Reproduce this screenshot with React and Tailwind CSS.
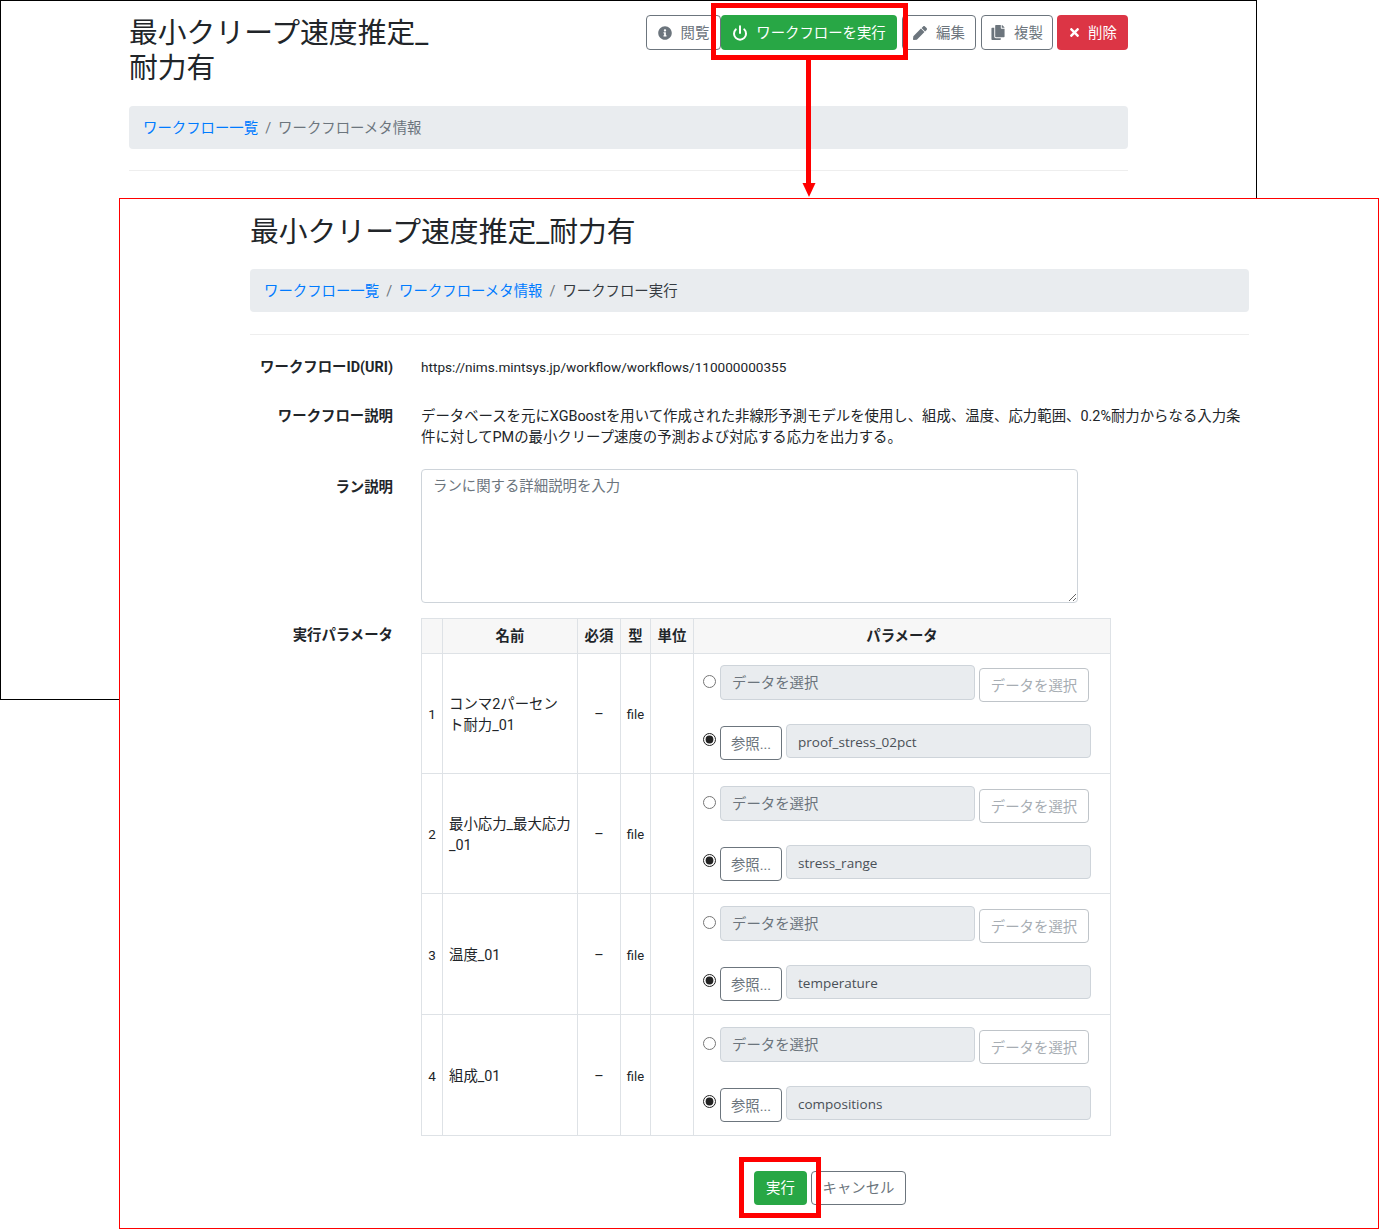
import { FaInfoCircle, FaPen, FaCopy, FaTimes } from 'react-icons/fa';
import { Power } from 'lucide-react';

const params = [
  { no: 1, name: 'コンマ2パーセント耐力_01', file: 'proof_stress_02pct', h: 'h-[120px]', pt: 'pt-[11px]' },
  { no: 2, name: '最小応力_最大応力_01', file: 'stress_range', h: 'h-[120px]', pt: 'pt-[12px]' },
  { no: 3, name: '温度_01', file: 'temperature', h: 'h-[121px]', pt: 'pt-[12px]' },
  { no: 4, name: '組成_01', file: 'compositions', h: 'h-[121px]', pt: 'pt-[12px]' },
];

const outlineBtn = 'h-[35px] flex items-center justify-center gap-[9px] rounded border border-[#6c757d] bg-white text-[#6c757d] text-[14.4px] whitespace-nowrap';

function Breadcrumb({ children }) {
  return (
    <div className="h-[43px] flex items-center gap-[7px] px-[14px] pt-[2px] rounded bg-[#e9ecef] text-[14.4px] text-[#6c757d]">
      {children}
    </div>
  );
}

function ParamRow({ file, pt }) {
  return (
    <div className={`pl-[9px] ${pt}`}>
      <div className="flex items-start gap-[4px] h-[59px]">
        <input type="radio" name={file} className="w-[13px] h-[13px] m-0 mt-[10px] accent-[#222]" />
        <input disabled placeholder="データを選択" className="w-[255px] h-[35px] px-[11px] pt-[2px] rounded border border-[#ced4da] bg-[#e9ecef] text-[14.4px] placeholder:text-[#6c757d]" />
        <button disabled className="w-[110px] h-[34px] mt-[3px] pt-[2px] rounded border border-[#bfc4c9] bg-white text-[14.4px] text-[#a7adb3]">データを選択</button>
      </div>
      <div className="flex items-start gap-[4px]">
        <input type="radio" name={file} defaultChecked className="w-[13px] h-[13px] m-0 mt-[9px] accent-[#222]" />
        <button className="w-[62px] h-[34px] mt-[2px] pt-[2px] rounded border border-[#6c757d] bg-white text-[14.4px] text-[#6c757d]">参照...</button>
        <input readOnly value={file} className="w-[305px] h-[34px] px-[11px] pt-[2px] rounded border border-[#ced4da] bg-[#e9ecef] text-[13.5px] text-[#495057] font-['Open_Sans',sans-serif]" />
      </div>
    </div>
  );
}

export default function App() {
  return (
    <div className="relative w-[1379px] h-[1229px] overflow-hidden bg-white text-[#212529] font-['Roboto','Noto_Sans_CJK_JP',sans-serif]">
      {/* back window */}
      <div className="absolute left-0 top-0 w-[1257px] h-[700px] border border-black pl-[128px] pr-[128px]">
        <div className="flex justify-between pt-[14px]">
          <h1 className="w-[310px] mt-[1px] text-[28.8px] leading-[35px] font-normal">最小クリープ速度推定_耐力有</h1>
          <div className="flex h-[35px]">
            <button className={`${outlineBtn} w-[75px]`}><FaInfoCircle className="w-[14px] h-[14px]" /><span className="pt-[2px]">閲覧</span></button>
            <button className="h-[35px] w-[176px] flex items-center justify-center gap-[8px] rounded bg-[#28a745] text-white text-[14.4px] whitespace-nowrap"><Power className="w-[16px] h-[16px]" strokeWidth={3} /><span className="pt-[2px]">ワークフローを実行</span></button>
            <button className={`${outlineBtn} w-[74px] ml-[5px]`}><FaPen className="w-[14px] h-[14px]" /><span className="pt-[2px]">編集</span></button>
            <button className={`${outlineBtn} w-[72px] ml-[5px]`}><FaCopy className="w-[14px] h-[15px]" /><span className="pt-[2px]">複製</span></button>
            <button className="h-[35px] w-[71px] ml-[4px] flex items-center justify-center gap-[7px] rounded bg-[#dc3545] text-white text-[14.4px]"><FaTimes className="w-[13px] h-[13px]" /><span className="pt-[2px]">削除</span></button>
          </div>
        </div>
        <div className="mt-[20px]">
          <Breadcrumb>
            <a className="text-[#007bff]">ワークフロー一覧</a>
            <span>/</span>
            <span>ワークフローメタ情報</span>
          </Breadcrumb>
        </div>
        <hr className="mt-[21px] border-[#eeeeee]" />
      </div>

      {/* front window */}
      <div className="absolute left-[119px] top-[198px] w-[1260px] h-[1031px] border border-[#ff0000] bg-white pl-[130px] pr-[129px] pt-[16px]">
        <h1 className="text-[28.8px] leading-[35px] font-normal">最小クリープ速度推定_耐力有</h1>
        <div className="mt-[19px]">
          <Breadcrumb>
            <a className="text-[#007bff]">ワークフロー一覧</a>
            <span>/</span>
            <a className="text-[#007bff]">ワークフローメタ情報</a>
            <span>/</span>
            <span className="text-[#343a40]">ワークフロー実行</span>
          </Breadcrumb>
        </div>
        <hr className="mt-[22px] border-[#eeeeee]" />

        <div className="grid grid-cols-[143px_1fr] gap-x-[28px] mt-[22px] text-[14.4px] leading-[21px]">
          <div className="text-right font-bold">ワークフローID(URI)</div>
          <div className="text-[13.6px]">https://nims.mintsys.jp/workflow/workflows/110000000355</div>

          <div className="text-right font-bold mt-[28px]">ワークフロー説明</div>
          <div className="mt-[28px]">
            データベースを元にXGBoostを用いて作成された非線形予測モデルを使用し、組成、温度、応力範囲、0.2%耐力からなる入力条件に対してPMの最小クリープ速度の予測および対応する応力を出力する。
          </div>

          <div className="text-right font-bold mt-[29px]">ラン説明</div>
          <textarea
            placeholder="ランに関する詳細説明を入力"
            className="block w-[657px] h-[134px] mt-[21px] px-[11px] py-[6px] rounded border border-[#ced4da] text-[14.4px] placeholder:text-[#6c757d]"
          />

          <div className="text-right font-bold mt-[22px]">実行パラメータ</div>
          <table className="table-fixed w-[689px] mt-[15px] border-collapse text-[14.4px]">
            <colgroup>
              <col className="w-[21px]" />
              <col className="w-[135px]" />
              <col className="w-[43px]" />
              <col className="w-[30px]" />
              <col className="w-[43px]" />
              <col className="w-[417px]" />
            </colgroup>
            <thead>
              <tr className="h-[35px] bg-[#f7f7f7]">
                {['', '名前', '必須', '型', '単位', 'パラメータ'].map((h, i) => (
                  <th key={i} className="border border-[#dee2e6] p-0 font-bold text-center">{h}</th>
                ))}
              </tr>
            </thead>
            <tbody>
              {params.map(p => (
                <tr key={p.no} className={p.h}>
                  <td className="border border-[#dee2e6] p-0 pt-[2px] text-center text-[13.5px]">{p.no}</td>
                  <td className="border border-[#dee2e6] px-[6px] pt-[2px] pb-0 break-all">{p.name}</td>
                  <td className="border border-[#dee2e6] p-0 pt-[2px] text-center">–</td>
                  <td className="border border-[#dee2e6] p-0 pt-[2px] text-center text-[13px]">file</td>
                  <td className="border border-[#dee2e6] p-0"></td>
                  <td className="border border-[#dee2e6] p-0 align-top"><ParamRow file={p.file} pt={p.pt} /></td>
                </tr>
              ))}
            </tbody>
          </table>
        </div>

        <div className="flex gap-[4px] mt-[35px] ml-[504px]">
          <button className="w-[53px] h-[34px] pt-[2px] rounded bg-[#28a745] text-white text-[14.4px]">実行</button>
          <button className={`${outlineBtn} !h-[34px] w-[95px] pt-[2px]`}>キャンセル</button>
        </div>
      </div>

      {/* annotations */}
      <div className="absolute left-[711px] top-[3px] w-[197px] h-[57px] border-[5px] border-[#ff0000]" />
      <svg className="absolute left-[800px] top-[58px]" width="18" height="140" viewBox="0 0 18 140">
        <rect x="6" y="0" width="5" height="126" fill="#ff0000" />
        <path d="M2.5 125 H15.5 L9 139 Z" fill="#ff0000" />
      </svg>
      <div className="absolute left-[739px] top-[1157px] w-[82px] h-[61px] border-[5px] border-[#ff0000]" />
    </div>
  );
}
